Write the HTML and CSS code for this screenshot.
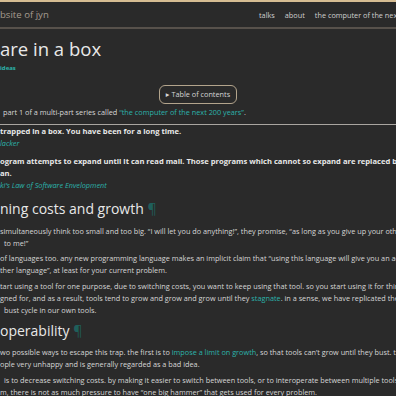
FILE: index.html
```html
<!DOCTYPE html>
<html lang="en">
<head>
    <meta charset="UTF-8">
    <meta name="viewport" content="width=device-width, initial-scale=1.0">
    <title>you are in a box</title>
    <link rel="stylesheet" href="styles.css">
</head>
<body>
    <header class="site-header">
        <a href="#" class="site-title">bsite of jyn</a>
        <nav class="site-nav">
            <a href="#">talks</a>
            <a href="#">about</a>
            <a href="#">the computer of the next 200 years</a>
        </nav>
    </header>

    <main class="post">
        <h1 class="post-title">are in a box</h1>
        <div class="post-tags"><a href="#">ideas</a></div>

        <div class="toc-row">
            <button class="toc-button">&#9656; Table of contents</button>
        </div>

        <p class="series">part 1 of a multi-part series called <a href="#">“the computer of the next 200 years”</a>.</p>

        <hr class="rule">

        <blockquote class="quote">
            <p>trapped in a box. You have been for a long time.</p>
            <cite><a href="#">lacker</a></cite>
        </blockquote>

        <blockquote class="quote">
            <p>ogram attempts to expand until it can read mail. Those programs which cannot so expand are replaced by<br>an.</p>
            <cite><a href="#">ki’s Law of Software Envelopment</a></cite>
        </blockquote>

        <h2 class="section">ning costs and growth <a href="#" class="anchor">¶</a></h2>

        <p>simultaneously think too small and too big. “I will let you do anything!”, they promise, “as long as you give up your other<br><span class="indent">to me!”</span></p>
        <p>of languages too. any new programming language makes an implicit claim that “using this language will give you an advantage<br>ther language”, at least for your current problem.</p>
        <p>tart using a tool for one purpose, due to switching costs, you want to keep using that tool. so you start using it for things<br>gned for, and as a result, tools tend to grow and grow and grow until they <a href="#">stagnate</a>. in a sense, we have replicated the<br><span class="indent">bust cycle in our own tools.</span></p>

        <h2 class="section">operability <a href="#" class="anchor">¶</a></h2>

        <p>wo possible ways to escape this trap. the first is to <a href="#">impose a limit on growth</a>, so that tools can’t grow until they bust. this<br>ople very unhappy and is generally regarded as a bad idea.</p>
        <p><span class="indent">is to decrease switching costs. by making it easier to switch between tools, or to interoperate between multiple tools</span><br>m, there is not as much pressure to have “one big hammer” that gets used for every problem.</p>
    </main>
</body>
</html>
```

FILE: styles.css
```css
:root {
    --background-color: #2a2a2a;
    --text-color: #d6d6d6;
    --heading-color: #e8e8e8;
    --link-color: #2bb3ab;
    --accent-color: #d6bd93;
}

body {
    font-family: 'Open Sans', 'DejaVu Sans', sans-serif;
    font-size: 7.3px;
    line-height: 12px;
    margin: 0;
    padding: 0;
    background-color: var(--background-color);
    color: var(--text-color);
    overflow: hidden;
}

a {
    color: var(--link-color);
    text-decoration: none;
}

.site-header {
    display: flex;
    align-items: center;
    height: 25px;
    border-top: 2px solid var(--accent-color);
    border-bottom: 2px solid #57514b;
    white-space: nowrap;
}

.site-title {
    flex: 0 0 259px;
    color: #a69c90;
    font-size: 9.6px;
}

.site-nav {
    display: flex;
    gap: 10px;
    flex: none;
}

.site-nav a {
    color: #cfcfcf;
}

.post {
    padding-top: 9px;
    white-space: nowrap;
}

.post p {
    margin: 0 0 3.5px;
}

.post-title {
    color: var(--heading-color);
    font-size: 18.5px;
    font-weight: 400;
    line-height: 22px;
    margin: 0;
}

.post-tags {
    margin-top: 3px;
    line-height: 10px;
    font-size: 6px;
    font-weight: 700;
}

.toc-row {
    display: flex;
    justify-content: center;
    margin-top: 12px;
}

.toc-button {
    font-family: inherit;
    font-size: 7.3px;
    line-height: 11px;
    color: #d6d6d6;
    background: transparent;
    border: 1px solid #b3a48c;
    border-radius: 6px;
    padding: 3px 6px;
}

.post .series {
    margin-top: 2px;
    padding-left: 3px;
}

.rule {
    border: 0;
    height: 1px;
    background-color: #a9a5a0;
    margin: 6px 0 0;
}

.quote {
    margin: 0 0 6px;
}

.quote p {
    color: #e8e8e8;
    font-size: 7.6px;
    font-weight: 700;
}

.post .quote p {
    margin: 0;
}

.quote cite {
    display: block;
    font-style: italic;
}

.section {
    color: var(--heading-color);
    font-size: 14px;
    font-weight: 400;
    line-height: 18px;
    margin: 6.3px 0 6.6px;
}

.quote + .section {
    margin-top: 9px;
}

.anchor {
    color: #1f5f5b;
}

.indent {
    padding-left: 4px;
}
```
